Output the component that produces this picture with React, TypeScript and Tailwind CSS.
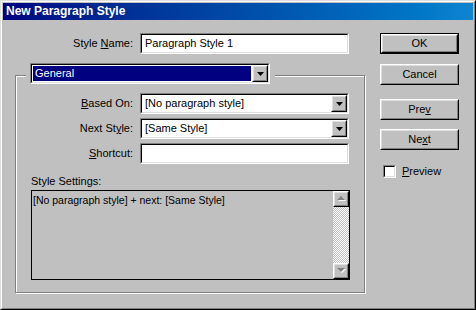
import React from "react";

function Sunken({ className = "", inner = "", children }: { className?: string; inner?: string; children?: React.ReactNode }) {
  return (
    <div className={`border border-t-[#808080] border-l-[#808080] border-r-white border-b-white ${className}`}>
      <div className={`h-full w-full border border-t-black border-l-black border-r-[#dfdfdf] border-b-[#dfdfdf] ${inner}`}>{children}</div>
    </div>
  );
}

function Raised({ className = "", inner = "", children }: { className?: string; inner?: string; children?: React.ReactNode }) {
  return (
    <div className={`border border-t-white border-l-white border-r-black border-b-black bg-[#c0c0c0] ${className}`}>
      <div className={`h-full w-full border border-t-[#dfdfdf] border-l-[#dfdfdf] border-r-[#808080] border-b-[#808080] ${inner}`}>{children}</div>
    </div>
  );
}

function Arrow() {
  return (
    <Raised className="w-[16px] h-[17px] shrink-0" inner="flex items-center justify-center">
      <svg width="7" height="4" viewBox="0 0 7 4">
        <polygon points="0,0 7,0 3.5,4" fill="#000" />
      </svg>
    </Raised>
  );
}

function Select({ text, w }: { text: string; w: string }) {
  return (
    <Sunken className={`${w} h-[21px]`} inner="bg-white flex items-center">
      <div className="flex-1 pl-[3px] leading-[17px] whitespace-nowrap overflow-hidden">{text}</div>
      <Arrow />
    </Sunken>
  );
}

function Button({ children, def = false, className = "" }: { children: React.ReactNode; def?: boolean; className?: string }) {
  const body = (
    <Raised className={def ? "h-full w-full" : `h-[21px] w-[79px] ${className}`} inner="flex items-center justify-center leading-[13px]">
      {children}
    </Raised>
  );
  if (def) return <div className={`h-[21px] w-[79px] border border-black ${className}`}>{body}</div>;
  return body;
}

function ScrollBtn({ up }: { up: boolean }) {
  return (
    <Raised className="w-[16px] h-[16px] shrink-0" inner="flex items-center justify-center">
      <svg width="9" height="6" viewBox="0 0 9 6">
        {up ? (
          <>
            <polygon points="1,5 9,5 5,1" fill="#fff" />
            <polygon points="0,4 8,4 4,0" fill="#808080" />
          </>
        ) : (
          <>
            <polygon points="1,1 9,1 5,5" fill="#fff" />
            <polygon points="0,0 8,0 4,4" fill="#808080" />
          </>
        )}
      </svg>
    </Raised>
  );
}

export default function App() {
  return (
    <div className="w-[476px] h-[310px] bg-[#c0c0c0] border border-t-[#dfdfdf] border-l-[#dfdfdf] border-r-black border-b-black font-['Liberation_Sans',Arial,sans-serif] text-[11px] text-black">
      <div className="h-full border border-t-white border-l-white border-r-[#808080] border-b-[#808080] p-px flex flex-col">
        <div className="h-[17px] bg-linear-to-r from-[#000080] to-[#1084d0] pl-[3px] text-white font-bold text-[12px] leading-[17px]">
          New Paragraph Style
        </div>
        <div className="flex pt-[13px] pl-[12px]">
          <div className="w-[350px]">
            <div className="flex items-center h-[21px]">
              <div className="w-[118px] text-right">
                Style <span className="underline underline-offset-1">N</span>ame:
              </div>
              <Sunken className="ml-[7px] w-[209px] h-[21px]" inner="bg-white pl-[3px] leading-[17px]">
                Paragraph Style 1
              </Sunken>
            </div>
            <div className="mt-[21px] relative h-[218px] w-[350px] border border-[#808080] shadow-[inset_1px_1px_0_#fff,1px_1px_0_#fff]">
              <div className="absolute left-[10px] top-[-13px] bg-[#c0c0c0] pl-[4px] pr-[5px]">
                <Sunken className="w-[240px] h-[21px]" inner="bg-white flex items-center">
                  <div className="flex-1 h-full p-px">
                    <div className="h-full bg-[#000080] text-white pl-[2px] leading-[15px]">General</div>
                  </div>
                  <Arrow />
                </Sunken>
              </div>
              <div className="pt-[17px] flex flex-col gap-[4px]">
                <div className="flex items-center h-[21px]">
                  <div className="w-[117px] text-right">
                    <span className="underline underline-offset-1">B</span>ased On:
                  </div>
                  <div className="ml-[7px]">
                    <Select text="[No paragraph style]" w="w-[209px]" />
                  </div>
                </div>
                <div className="flex items-center h-[21px]">
                  <div className="w-[117px] text-right">
                    Next St<span className="underline underline-offset-1">y</span>le:
                  </div>
                  <div className="ml-[7px]">
                    <Select text="[Same Style]" w="w-[209px]" />
                  </div>
                </div>
                <div className="flex items-center h-[21px]">
                  <div className="w-[117px] text-right">
                    <span className="underline underline-offset-1">S</span>hortcut:
                  </div>
                  <Sunken className="ml-[7px] w-[209px] h-[21px]" inner="bg-white" />
                </div>
              </div>
              <div className="ml-[15px] mt-[11px] leading-[13px]">Style Settings:</div>
              <div className="ml-[15px] mt-[2px] w-[319px] h-[90px] border border-black flex">
                <div className="flex-1 pl-px pt-[3px] text-[10.5px] leading-[12px] whitespace-nowrap">
                  [No paragraph style] + next: [Same Style]
                </div>
                <div className="w-[16px] flex flex-col">
                  <ScrollBtn up />
                  <div className="flex-1 bg-[image:repeating-conic-gradient(#c0c0c0_0_25%,#ffffff_0_50%)] bg-[length:2px_2px]" />
                  <ScrollBtn up={false} />
                </div>
              </div>
            </div>
          </div>
          <div className="ml-[15px] w-[79px] flex flex-col">
            <Button def>OK</Button>
            <Button className="mt-[10px]">Cancel</Button>
            <Button className="mt-[14px]">
              <span>
                Pre<span className="underline underline-offset-1">v</span>
              </span>
            </Button>
            <Button className="mt-[9px]">
              <span>
                Ne<span className="underline underline-offset-1">x</span>t
              </span>
            </Button>
            <div className="mt-[15px] flex items-center">
              <Sunken className="ml-[3px] w-[13px] h-[13px]" inner="bg-white" />
              <div className="ml-[6px] leading-[13px]">
                <span className="underline underline-offset-1">P</span>review
              </div>
            </div>
          </div>
        </div>
      </div>
    </div>
  );
}
